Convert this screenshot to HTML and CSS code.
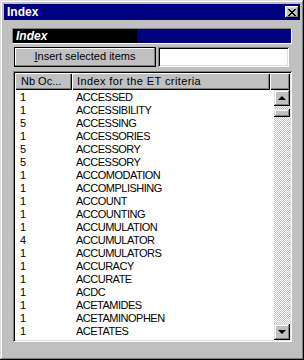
FILE: index.html
```html
<!DOCTYPE html>
<html lang="en">
<head>
    <meta charset="UTF-8">
    <title>Index</title>
    <link rel="stylesheet" href="styles.css">
</head>
<body>
    <div class="window">
        <div class="titlebar">
            <span class="title">Index</span>
            <div class="close-btn">
                <svg width="8" height="7" viewBox="0 0 8 7" shape-rendering="crispEdges">
                    <path d="M0 0h2v1h-2z M6 0h2v1h-2z M1 1h2v1h-2z M5 1h2v1h-2z M2 2h4v1h-4z M3 3h2v1h-2z M2 4h4v1h-4z M1 5h2v1h-2z M5 5h2v1h-2z M0 6h2v1h-2z M6 6h2v1h-2z" fill="#000"/>
                </svg>
            </div>
        </div>

        <div class="caption">
            <div class="caption-dark">Index</div>
            <div class="caption-blue"></div>
        </div>

        <div class="toolbar">
            <div class="btn"><u>I</u>nsert selected items</div>
            <div class="field"></div>
        </div>

        <div class="list">
            <div class="list-head">
                <div class="head-cell col-nb">Nb Oc...</div>
                <div class="head-cell col-name">Index for the ET criteria</div>
                <div class="head-cell col-rest"></div>
            </div>
            <div class="list-main">
                <div class="rows" id="rows"></div>
                <div class="scrollbar">
                    <div class="sb-btn"><span class="arrow-up"></span></div>
                    <div class="sb-track">
                        <div class="sb-thumb"></div>
                    </div>
                    <div class="sb-btn"><span class="arrow-down"></span></div>
                </div>
            </div>
        </div>
    </div>

<script>
    const items = [
        [1, 'ACCESSED'], [1, 'ACCESSIBILITY'], [5, 'ACCESSING'], [1, 'ACCESSORIES'],
        [5, 'ACCESSORY'], [5, 'ACCESSORY'], [1, 'ACCOMODATION'], [1, 'ACCOMPLISHING'],
        [1, 'ACCOUNT'], [1, 'ACCOUNTING'], [1, 'ACCUMULATION'], [4, 'ACCUMULATOR'],
        [1, 'ACCUMULATORS'], [1, 'ACCURACY'], [1, 'ACCURATE'], [1, 'ACDC'],
        [1, 'ACETAMIDES'], [1, 'ACETAMINOPHEN'], [1, 'ACETATES']
    ];

    const rows = document.getElementById('rows');
    items.forEach(item => {
        const row = document.createElement('div');
        row.className = 'row';
        row.innerHTML = `<span class="cell-nb">${item[0]}</span><span class="cell-name">${item[1]}</span>`;
        rows.appendChild(row);
    });
</script>
</body>
</html>
```

FILE: styles.css
```css
body {
    margin: 0;
    background: #c0c0c0;
    font-family: "Liberation Sans", Arial, sans-serif;
    font-size: 11px;
    color: #000;
}

.window {
    width: 304px;
    height: 360px;
    box-sizing: border-box;
    padding: 4px;
    background: #c0c0c0;
    box-shadow: inset -1px -1px #000, inset 1px 1px #dfdfdf, inset -2px -2px #808080, inset 2px 2px #fff;
    display: flex;
    flex-direction: column;
}

.titlebar {
    height: 16px;
    background: #000080;
    display: flex;
    align-items: center;
    justify-content: space-between;
    padding: 0 1px 0 3px;
}

.title {
    color: #fff;
    font-weight: bold;
    font-size: 12px;
}

.close-btn {
    width: 14px;
    height: 12px;
    background: #c0c0c0;
    box-shadow: inset -1px -1px #000, inset 1px 1px #fff, inset -2px -2px #808080, inset 2px 2px #dfdfdf;
    display: flex;
    align-items: center;
    justify-content: center;
}

.close-btn svg {
    display: block;
    margin-left: -1px;
}

.caption {
    margin: 8px 8px 0 8px;
    height: 16px;
    box-sizing: border-box;
    border-top: 1px solid #808080;
    border-left: 1px solid #808080;
    border-bottom: 1px solid #fff;
    border-right: 1px solid #fff;
    display: flex;
}

.caption-dark {
    width: 124px;
    background: #000;
    color: #fff;
    font-weight: bold;
    font-style: italic;
    font-size: 12px;
    padding-left: 3px;
    line-height: 14px;
    box-sizing: border-box;
}

.caption-blue {
    flex: 1;
    background: #000080;
}

.toolbar {
    display: flex;
    margin: 3px 0 0 10px;
    gap: 2px;
    height: 20px;
}

.btn {
    width: 142px;
    box-sizing: border-box;
    border: 1px solid #000;
    box-shadow: inset -1px -1px #808080, inset 1px 1px #fff;
    text-align: center;
    line-height: 17px;
}

.field {
    width: 131px;
    background: #fff;
    box-shadow: inset 1px 1px #808080, inset -1px -1px #fff, inset 2px 2px #000, inset -2px -2px #dfdfdf;
}

.list {
    margin: 4px 0 0 9px;
    width: 279px;
    height: 271px;
    box-sizing: border-box;
    padding: 2px;
    box-shadow: inset 1px 1px #808080, inset -1px -1px #fff, inset 2px 2px #000, inset -2px -2px #dfdfdf;
    display: flex;
    flex-direction: column;
}

.list-head {
    display: flex;
    height: 17px;
    flex-shrink: 0;
}

.head-cell {
    box-sizing: border-box;
    background: #c0c0c0;
    box-shadow: inset 1px 1px #fff, inset -1px -1px #000, inset -2px -2px #808080;
    line-height: 17px;
    white-space: nowrap;
    overflow: hidden;
}

.col-nb {
    width: 57px;
    padding-left: 6px;
}

.col-name {
    width: 198px;
    padding-left: 5px;
    letter-spacing: 0.4px;
}

.col-rest {
    flex: 1;
}

.list-main {
    flex: 1;
    display: flex;
    background: #fff;
    min-height: 0;
}

.rows {
    flex: 1;
    overflow: hidden;
    padding-top: 1px;
}

.row {
    display: flex;
    height: 13px;
    line-height: 13px;
    white-space: nowrap;
}

.cell-nb {
    width: 57px;
    padding-left: 5px;
    box-sizing: border-box;
}

.cell-name {
    padding-left: 4px;
    letter-spacing: -0.5px;
}

.scrollbar {
    width: 16px;
    display: flex;
    flex-direction: column;
}

.sb-btn {
    height: 16px;
    flex-shrink: 0;
    background: #c0c0c0;
    box-shadow: inset -1px -1px #000, inset 1px 1px #dfdfdf, inset -2px -2px #808080, inset 2px 2px #fff;
    display: flex;
    align-items: center;
    justify-content: center;
}

.arrow-up {
    width: 0;
    height: 0;
    border-left: 4px solid transparent;
    border-right: 4px solid transparent;
    border-bottom: 4px solid #000;
}

.arrow-down {
    width: 0;
    height: 0;
    border-left: 4px solid transparent;
    border-right: 4px solid transparent;
    border-top: 4px solid #000;
}

.sb-track {
    flex: 1;
    background-color: #fff;
    background-image: conic-gradient(#c0c0c0 25%, #fff 0 50%, #c0c0c0 0 75%, #fff 0);
    background-size: 2px 2px;
    padding-top: 3px;
}

.sb-thumb {
    height: 8px;
    background: #c0c0c0;
    box-shadow: inset -1px -1px #000, inset 1px 1px #dfdfdf, inset -2px -2px #808080, inset 2px 2px #fff;
}
```
